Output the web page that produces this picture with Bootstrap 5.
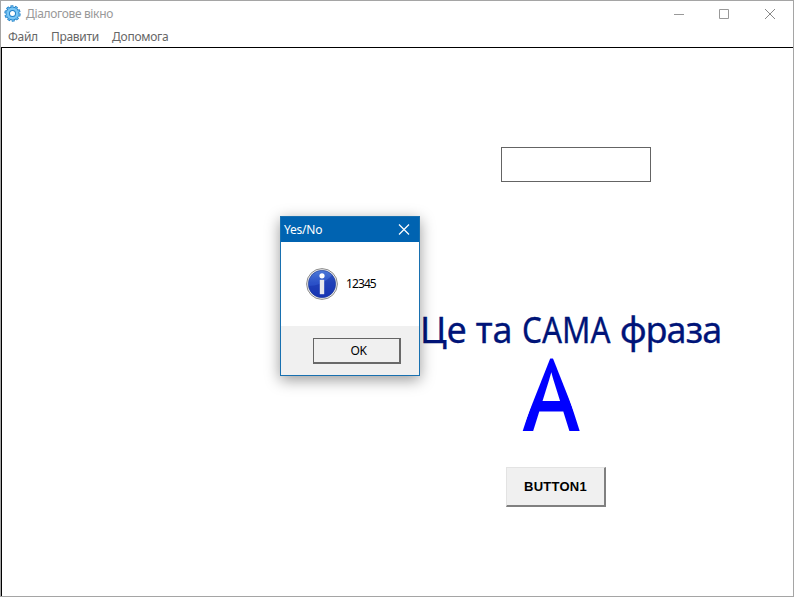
<!DOCTYPE html>
<html lang="uk">
<head>
<meta charset="utf-8">
<title>Діалогове вікно</title>
<link href="https://cdn.jsdelivr.net/npm/bootstrap@5.3.0/dist/css/bootstrap.min.css" rel="stylesheet">
<style>
body{font-family:"Noto Sans","Open Sans",sans-serif;font-size:12px;line-height:16px;color:#000}
.app-window{width:794px;height:597px;border:1px solid #a5a5a5;background:#fff}
.title-bar{height:26px;color:#999}
.app-logo{width:17px;height:17px;margin-left:3px;margin-right:5px;margin-bottom:2px}
.title-text{letter-spacing:-.35px}
.caption-box{width:45.5px;height:25px}
.menu-bar{height:20px;padding-left:7px;gap:13px;color:#666}
.menu-bar a{letter-spacing:-.27px}
.form-area{border-top:1px solid #000;border-left:1px solid #000}
.field{left:499px;top:99px;width:150px;height:35px;border:1px solid #646464}
.phrase{left:418px;top:262px;font-size:36px;line-height:40px;color:#001478;-webkit-text-stroke:.3px #001478}
.caps-word{transform:scaleX(.87);transform-origin:0 50%;margin-right:-13px}
.last-word{letter-spacing:-.9px}
.big-letter{left:522px;top:310px;font:102px/76px "Liberation Sans",sans-serif;color:#00f;-webkit-text-stroke:3px #00f;transform:scaleX(.8);transform-origin:0 50%;clip-path:polygon(33px 0,36px 0,72px 73px,-3px 73px)}
.classic-btn{background:#f0f0f0;border:1px solid #e3e3e3;border-right:2px solid #808080;border-bottom:2px solid #808080;color:#000}
.btn-main{left:504px;top:419px;width:100px;height:40px;font:bold 13px/16px "Liberation Sans",sans-serif;letter-spacing:.25px}
.msg-box{left:278px;top:168px;width:140px;height:160px;border:1px solid #1870b0;box-shadow:0 4px 14px rgba(0,0,0,.4)}
.msg-title{height:25px;background:#0063b1;color:#fff;padding-left:3px;padding-right:8px;letter-spacing:-.2px}
.msg-body{height:84px;padding-left:25px;gap:8px;letter-spacing:-.9px}
.msg-foot{background:#f0f0f0;padding:12px 18px 0 32px}
.btn-ok{width:88px;height:26px;border:1px solid #646464;border-right:2px solid #696969;border-bottom:2px solid #696969;letter-spacing:-.3px}
</style>
<script src="https://cdn.jsdelivr.net/npm/bootstrap@5.3.0/dist/js/bootstrap.bundle.min.js"></script>
</head>
<body class="overflow-hidden">
<div class="app-window d-flex flex-column">
  <header class="title-bar d-flex align-items-center">
    <svg class="app-logo" viewBox="0 0 17 17"><circle cx="8.5" cy="8.5" r="7" fill="none" stroke="#2584c9" stroke-width="2.4" stroke-dasharray="2.8 1.6"/><circle cx="8.5" cy="8.5" r="4.7" fill="none" stroke="#2381c7" stroke-width="4.4"/><circle cx="8.5" cy="8.5" r="4.8" fill="none" stroke="#79c6f5" stroke-width="2.6"/><circle cx="8.5" cy="8.5" r="6.6" fill="none" stroke="#62b5ec" stroke-width="1.6" stroke-dasharray="1.6 2.55" stroke-dashoffset="-.6"/></svg>
    <span class="title-text">Діалогове вікно</span>
    <div class="d-flex ms-auto">
      <svg class="caption-box" viewBox="0 0 45.5 25"><path d="M17 12.5h10" stroke="#999"/></svg>
      <svg class="caption-box" viewBox="0 0 45.5 25"><path d="M17.5 7.5h9v9h-9z" fill="none" stroke="#999"/></svg>
      <svg class="caption-box" viewBox="0 0 45.5 25"><path d="M17 7l10 10M27 7L17 17" stroke="#888"/></svg>
    </div>
  </header>
  <nav class="menu-bar d-flex align-items-center">
    <a class="text-reset text-decoration-none">Файл</a><a class="text-reset text-decoration-none">Правити</a><a class="text-reset text-decoration-none">Допомога</a>
  </nav>
  <main class="form-area position-relative flex-grow-1">
    <input class="field position-absolute bg-white rounded-0" aria-label="text">
    <div class="phrase position-absolute text-nowrap">Це та <span class="caps-word d-inline-block">САМА</span> <span class="last-word">фраза</span></div>
    <div class="big-letter position-absolute">A</div>
    <button class="classic-btn btn-main position-absolute p-0">BUTTON1</button>
    <section class="msg-box position-absolute d-flex flex-column bg-white">
      <div class="msg-title d-flex align-items-center justify-content-between"><span>Yes/No</span>
        <svg width="14" height="14" viewBox="0 0 14 14"><path d="M2 1.5l10 10M12 1.5l-10 10" stroke="#fff" stroke-width="1.2"/></svg></div>
      <div class="msg-body d-flex align-items-center">
        <svg width="32" height="32" viewBox="0 0 32 32"><defs><linearGradient id="b" x1="0" y1="0" x2="0" y2="1"><stop offset="0" stop-color="#4c79d8"/><stop offset=".45" stop-color="#2c52c8"/><stop offset="1" stop-color="#1c3cc0"/></linearGradient></defs><circle cx="16" cy="16" r="15.4" fill="#eee" stroke="#8d8d8d"/><circle cx="16" cy="16" r="13.7" fill="url(#b)" stroke="#243d91" stroke-width=".6"/><path d="M2.8 18C9 18 20 15 26 7 31 13 30 22 25 26 17 32 4 29 2.8 18z" fill="#1029a0" opacity=".4"/><circle cx="16" cy="7.8" r="2.6" fill="#fff"/><path d="M13.8 11.8h4.4v14.4h-4.4z" fill="#e8e8ec"/></svg>
        <span>12345</span></div>
      <div class="msg-foot flex-grow-1"><button class="classic-btn btn-ok d-block p-0 ps-1">OK</button></div>
    </section>
  </main>
</div>
</body>
</html>
